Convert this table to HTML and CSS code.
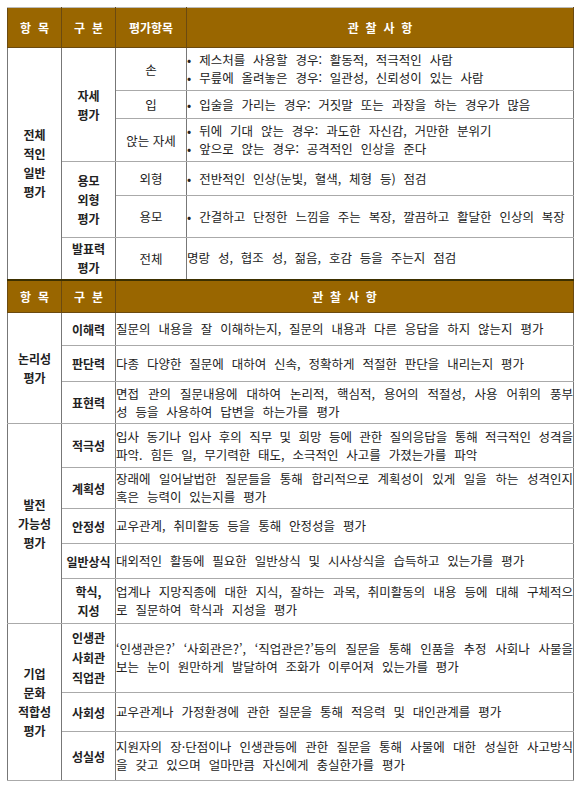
FILE: index.html
```html
<!DOCTYPE html>
<html lang="ko">
<head>
<meta charset="utf-8">
<link rel="stylesheet" href="styles.css">
</head>
<body>
<table class="eval">
  <colgroup><col class="c1"><col class="c2"><col class="c3"><col class="c4"></colgroup>
  <tr class="head h40"><th>항 목</th><th>구 분</th><th>평가항목</th><th>관 찰 사 항</th></tr>
  <tr class="h43">
    <td rowspan="6" class="lab">전체<br>적인<br>일반<br>평가</td>
    <td rowspan="3" class="lab">자세<br>평가</td>
    <td class="sub">손</td>
    <td class="obs"><div>• 제스처를 사용할 경우: 활동적, 적극적인 사람</div><div>• 무릎에 올려놓은 경우: 일관성, 신뢰성이 있는 사람</div></td>
  </tr>
  <tr class="h28"><td class="sub">입</td><td class="obs">• 입술을 가리는 경우: 거짓말 또는 과장을 하는 경우가 많음</td></tr>
  <tr class="h43"><td class="sub">앉는 자세</td><td class="obs"><div>• 뒤에 기대 앉는 경우: 과도한 자신감, 거만한 분위기</div><div>• 앞으로 앉는 경우: 공격적인 인상을 준다</div></td></tr>
  <tr class="h34"><td rowspan="2" class="lab">용모<br>외형<br>평가</td><td class="sub">외형</td><td class="obs">• 전반적인 인상(눈빛, 혈색, 체형 등) 점검</td></tr>
  <tr class="h42"><td class="sub">용모</td><td class="obs">• 간결하고 단정한 느낌을 주는 복장, 깔끔하고 활달한 인상의 복장</td></tr>
  <tr class="h42"><td class="lab">발표력<br>평가</td><td class="sub">전체</td><td class="obs">명랑 성, 협조 성, 젊음, 호감 등을 주는지 점검</td></tr>

  <tr class="head sep h33"><th>항 목</th><th>구 분</th><th colspan="2">관 찰 사 항</th></tr>
  <tr class="h33">
    <td rowspan="3" class="lab">논리성<br>평가</td>
    <td class="lab">이해력</td>
    <td colspan="2" class="obs">질문의 내용을 잘 이해하는지, 질문의 내용과 다른 응답을 하지 않는지 평가</td>
  </tr>
  <tr class="h36"><td class="lab">판단력</td><td colspan="2" class="obs">다종 다양한 질문에 대하여 신속, 정확하게 적절한 판단을 내리는지 평가</td></tr>
  <tr class="h42"><td class="lab">표현력</td><td colspan="2" class="obs"><div class="jl">면접 관의 질문내용에 대하여 논리적, 핵심적, 용어의 적절성, 사용 어휘의 풍부</div><div>성 등을 사용하여 답변을 하는가를 평가</div></td></tr>
  <tr class="h44">
    <td rowspan="5" class="lab">발전<br>가능성<br>평가</td>
    <td class="lab">적극성</td>
    <td colspan="2" class="obs"><div class="jl">입사 동기나 입사 후의 직무 및 희망 등에 관한 질의응답을 통해 적극적인 성격을</div><div>파악. 힘든 일, 무기력한 태도, 소극적인 사고를 가졌는가를 파악</div></td>
  </tr>
  <tr class="h41"><td class="lab">계획성</td><td colspan="2" class="obs"><div class="jl">장래에 일어날법한 질문들을 통해 합리적으로 계획성이 있게 일을 하는 성격인지</div><div>혹은 능력이 있는지를 평가</div></td></tr>
  <tr class="h35"><td class="lab">안정성</td><td colspan="2" class="obs">교우관계, 취미활동 등을 통해 안정성을 평가</td></tr>
  <tr class="h35"><td class="lab">일반상식</td><td colspan="2" class="obs">대외적인 활동에 필요한 일반상식 및 시사상식을 습득하고 있는가를 평가</td></tr>
  <tr class="h45"><td class="lab">학식,<br>지성</td><td colspan="2" class="obs"><div class="jl">업계나 지망직종에 대한 지식, 잘하는 과목, 취미활동의 내용 등에 대해 구체적으</div><div>로 질문하여 학식과 지성을 평가</div></td></tr>
  <tr class="h69">
    <td rowspan="3" class="lab">기업<br>문화<br>적합성<br>평가</td>
    <td class="lab tall">인생관<br>사회관<br>직업관</td>
    <td colspan="2" class="obs"><div class="jl">‘인생관은?’ ‘사회관은?’, ‘직업관은?’등의 질문을 통해 인품을 추정 사회나 사물을</div><div>보는 눈이 원만하게 발달하여 조화가 이루어져 있는가를 평가</div></td>
  </tr>
  <tr class="h39"><td class="lab">사회성</td><td colspan="2" class="obs">교우관계나 가정환경에 관한 질문을 통해 적응력 및 대인관계를 평가</td></tr>
  <tr class="h49"><td class="lab">성실성</td><td colspan="2" class="obs"><div class="jl">지원자의 장·단점이나 인생관등에 관한 질문을 통해 사물에 대한 성실한 사고방식</div><div>을 갖고 있으며 얼마만큼 자신에게 충실한가를 평가</div></td></tr>
</table>
</body>
</html>
```

FILE: styles.css
```css
body {
  margin: 0;
  padding: 7px;
  background: #ffffff;
  font-family: "Noto Sans CJK KR", "Noto Sans", sans-serif;
  font-size: 12.5px;
  color: #222222;
}

.eval {
  border-collapse: collapse;
  table-layout: fixed;
  width: 566px;
}

.c1 { width: 54px; }
.c2 { width: 54px; }
.c3 { width: 71px; }
.c4 { width: 387px; }

.eval th,
.eval td {
  border-top: 1px solid #aaaaaa;
  border-bottom: 1px solid #aaaaaa;
  border-left: 1px solid #777777;
  border-right: 1px solid #777777;
  padding: 0;
  vertical-align: middle;
}

.eval th {
  background: #996600;
  color: #ffffff;
  font-weight: bold;
  font-size: 12px;
  word-spacing: 3.5px;
  text-align: center;
  border-left-color: #6b4a10;
  border-right-color: #6b4a10;
  border-top-color: #bbbbbb;
  border-bottom-color: #6b4a10;
}

.sep th {
  border-top: 2px solid #3d3000;
}

.lab {
  text-align: center;
  font-weight: bold;
  font-size: 12px;
  line-height: 19px;
  padding: 0 1px;
}

.tall {
  line-height: 20px;
}

.sub {
  text-align: center;
}

.obs {
  padding: 0 3px;
  line-height: 18px;
  word-spacing: 4.4px;
  text-align: left;
}

.obs .jl {
  text-align: justify;
  text-align-last: justify;
  white-space: nowrap;
  word-spacing: 1.5px;
}

.h28 { height: 28px; }
.h33 { height: 33px; }
.h34 { height: 34px; }
.h35 { height: 35px; }
.h36 { height: 36px; }
.h39 { height: 39px; }
.h40 { height: 40px; }
.h41 { height: 41px; }
.h42 { height: 42px; }
.h43 { height: 43px; }
.h44 { height: 44px; }
.h45 { height: 45px; }
.h49 { height: 49px; }
.h69 { height: 69px; }
```
